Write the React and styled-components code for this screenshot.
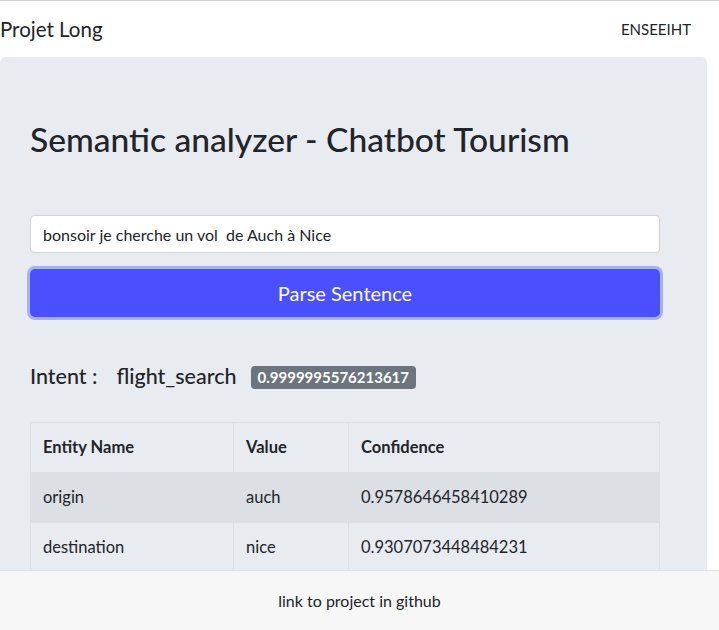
import React, { useState } from "react";
import styled, { createGlobalStyle } from "styled-components";

const GlobalStyle = createGlobalStyle`
  html, body {
    margin: 0;
    padding: 0;
  }
  body {
    font-family: Lato, "Open Sans", sans-serif;
    color: #212529;
    background: #fff;
    border-top: 1px solid #d3d3d3;
    overflow: hidden;
  }
  * {
    box-sizing: border-box;
  }
`;

const Navbar = styled.nav`
  display: flex;
  justify-content: space-between;
  align-items: center;
  height: 56px;
  padding: 0 28px 0 0;
`;

const Brand = styled.a`
  font-size: 20.5px;
  color: #212529;
  text-decoration: none;
`;

const NavLink = styled.a`
  font-size: 15px;
  color: #212529;
  text-decoration: none;
`;

const Jumbotron = styled.main`
  margin-right: 12px;
  background-color: #e8ebef;
  border-radius: 6px;
  padding: 62px 47px 120px 30px;
  min-height: 600px;
`;

const Title = styled.h1`
  margin: 0 0 56px;
  font-size: 33.6px;
  font-weight: 500;
  line-height: 1.2;
`;

const Input = styled.input`
  display: block;
  width: 100%;
  height: 38px;
  padding: 6px 12px;
  font-family: inherit;
  font-size: 16px;
  color: #212529;
  background: #fff;
  border: 1px solid #ced4da;
  border-radius: 4px;
  outline: none;
`;

const Button = styled.button`
  display: block;
  width: 100%;
  height: 48px;
  margin-top: 16px;
  font-family: inherit;
  font-size: 20px;
  color: #fff;
  background-color: #4b50ff;
  border: none;
  border-radius: 5px;
  box-shadow: 0 0 0 3px rgba(120, 140, 250, 0.6);
  cursor: pointer;
`;

const IntentRow = styled.h5`
  display: flex;
  align-items: center;
  margin: 48px 0 33px;
  font-size: 21.5px;
  font-weight: 500;
  line-height: 1.2;
  height: 24px;
`;

const IntentLabel = styled.span`
  margin-right: ${(p) => p.gap}px;
`;

const Badge = styled.span`
  display: inline-block;
  padding: 4px 7px;
  font-size: 15px;
  font-weight: 700;
  line-height: 1;
  color: #fff;
  background-color: #6c757d;
  border-radius: 4px;
`;

const Table = styled.table`
  width: 100%;
  border-collapse: collapse;
  font-size: 16.5px;
  border: 1px solid #dcdfe3;
`;

const Th = styled.th`
  width: ${(p) => p.w}px;
  padding: 12px;
  text-align: left;
  font-weight: 700;
  line-height: 1.5;
  border: 1px solid #dcdfe3;
`;

const Tr = styled.tr`
  background-color: ${(p) => (p.striped ? "#dcdfe3" : "transparent")};
`;

const Td = styled.td`
  padding: 12px;
  line-height: 1.5;
  border: 1px solid #dcdfe3;
  border-top: none;
`;

const Footer = styled.footer`
  position: fixed;
  left: 0;
  right: 0;
  bottom: 0;
  height: 60px;
  display: flex;
  justify-content: center;
  align-items: center;
  background-color: #f7f7f7;
  border-top: 1px solid #e2e2e2;
  font-size: 16px;
`;

const FooterLink = styled.a`
  color: #212529;
  text-decoration: none;
`;

const entities = [
  { name: "origin", value: "auch", confidence: "0.9578646458410289" },
  { name: "destination", value: "nice", confidence: "0.9307073448484231" },
];

export default function App() {
  const [sentence, setSentence] = useState(
    "bonsoir je cherche un vol  de Auch à Nice"
  );

  return (
    <>
      <GlobalStyle />
      <Navbar>
        <Brand href="#">Projet Long</Brand>
        <NavLink href="#">ENSEEIHT</NavLink>
      </Navbar>
      <Jumbotron>
        <Title>Semantic analyzer - Chatbot Tourism</Title>
        <Input
          type="text"
          value={sentence}
          onChange={(e) => setSentence(e.target.value)}
        />
        <Button type="button">Parse Sentence</Button>
        <IntentRow>
          <IntentLabel gap={19}>Intent :</IntentLabel>
          <IntentLabel gap={14}>flight_search</IntentLabel>
          <Badge>0.9999995576213617</Badge>
        </IntentRow>
        <Table>
          <thead>
            <tr>
              <Th w={203}>Entity Name</Th>
              <Th w={115}>Value</Th>
              <Th>Confidence</Th>
            </tr>
          </thead>
          <tbody>
            {entities.map((ent, i) => (
              <Tr key={ent.name} striped={i % 2 === 0}>
                <Td>{ent.name}</Td>
                <Td>{ent.value}</Td>
                <Td>{ent.confidence}</Td>
              </Tr>
            ))}
          </tbody>
        </Table>
      </Jumbotron>
      <Footer>
        <FooterLink href="#">link to project in github</FooterLink>
      </Footer>
    </>
  );
}
